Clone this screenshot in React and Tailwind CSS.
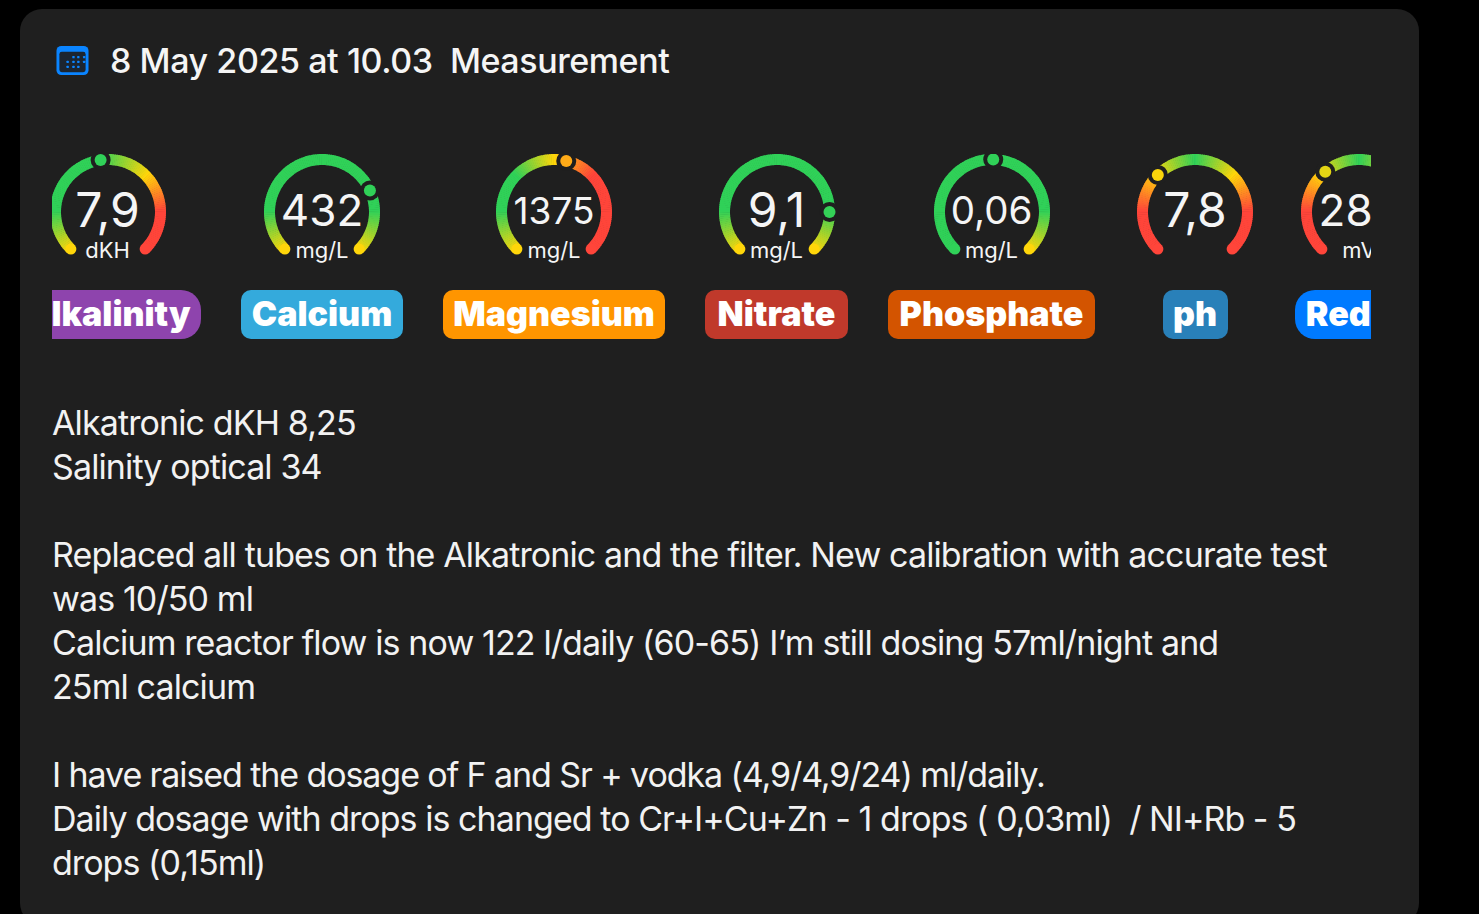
import React from "react";

const GREEN = [48, 209, 88];
const YELLOW = [255, 214, 10];
const RED = [255, 69, 58];

const toHex = (c) => `rgb(${c.map((v) => Math.round(v)).join(",")})`;

const colorAt = (stops, t) => {
  for (let i = 1; i < stops.length; i++) {
    if (t <= stops[i][0]) {
      const [t0, c0] = stops[i - 1];
      const [t1, c1] = stops[i];
      const k = t1 === t0 ? 0 : (t - t0) / (t1 - t0);
      return c0.map((v, j) => v + (c1[j] - v) * k);
    }
  }
  return stops[stops.length - 1][1];
};

// gauge geometry, 270 degree sweep starting bottom left
const R = 52.5;
const CX = 60;
const CY = 58;
const point = (t, r = R) => {
  const a = ((225 + t * 270) * Math.PI) / 180;
  return [CX + r * Math.sin(a), CY - r * Math.cos(a)];
};

const Arc = ({ stops, value }) => {
  const segs = [];
  const n = 135;
  for (let i = 0; i < n; i++) {
    const a = point(i / n);
    const b = point(Math.min(1, (i + 1.3) / n));
    segs.push(
      <path
        key={i}
        d={`M${a[0]} ${a[1]} A${R} ${R} 0 0 1 ${b[0]} ${b[1]}`}
        fill="none"
        stroke={toHex(colorAt(stops, (i + 0.5) / n))}
        strokeWidth="11"
      />
    );
  }
  const start = point(0);
  const end = point(1);
  const dot = point(value);
  return (
    <svg width="120" height="116" viewBox="0 0 120 116" className="block">
      {segs}
      <circle cx={start[0]} cy={start[1]} r="5.5" fill={toHex(colorAt(stops, 0))} />
      <circle cx={end[0]} cy={end[1]} r="5.5" fill={toHex(colorAt(stops, 1))} />
      <circle cx={dot[0]} cy={dot[1]} r="10" fill="#1f1f1f" />
      <circle cx={dot[0]} cy={dot[1]} r="6" fill={toHex(colorAt(stops, value))} />
    </svg>
  );
};

const midGreen = [[0, YELLOW], [0.17, GREEN], [0.83, GREEN], [1, YELLOW]];
const midRed = [[0, RED], [0.17, RED], [0.33, YELLOW], [0.5, GREEN], [0.67, YELLOW], [0.83, RED], [1, RED]];

const gauges = [
  { value: "7,9", unit: "dKH", name: "Alkalinity", t: 0.47, size: "text-[48px]", pill: "w-[187px] bg-[#8e44ad] rounded-[20px]",
    stops: [[0, YELLOW], [0.17, GREEN], [0.47, GREEN], [0.67, YELLOW], [0.83, RED], [1, RED]] },
  { value: "432", unit: "mg/L", name: "Calcium", t: 0.744, size: "text-[44px]", pill: "w-[162px] bg-[#34aadc] rounded-[10px]", stops: midGreen },
  { value: "1375", unit: "mg/L", name: "Magnesium", t: 0.55, size: "text-[37px]", pill: "w-[222px] bg-[#ff9500] rounded-[10px]",
    stops: [[0, YELLOW], [0.17, GREEN], [0.33, GREEN], [0.5, YELLOW], [0.67, RED], [1, RED]] },
  { value: "9,1", unit: "mg/L", name: "Nitrate", t: 0.833, size: "text-[48px]", pill: "w-[143px] bg-[#c0392b] rounded-[10px]", stops: midGreen },
  { value: "0,06", unit: "mg/L", name: "Phosphate", t: 0.505, size: "text-[38.5px]", pill: "w-[207px] bg-[#d35400] rounded-[10px]",
    stops: [[0, GREEN], [0.83, GREEN], [1, YELLOW]] },
  { value: "7,8", unit: "", name: "ph", t: 0.333, size: "text-[48px]", pill: "w-[65px] bg-[#2980b9] rounded-[10px]", stops: midRed },
  { value: "285", unit: "mV", name: "Redox", t: 0.352, size: "text-[44px]", pill: "w-[128px] bg-[#007aff] rounded-[20px]", stops: midRed },
];

const CalendarIcon = () => {
  const dots = [
    [18, 11], [23, 11], [29, 11],
    [12, 16], [18, 16], [23, 16], [29, 16],
    [12, 21], [18, 21], [23, 21],
  ];
  return (
    <svg width="33" height="31" viewBox="0 0 34 31" className="shrink-0">
      <rect x="0.5" y="0.5" width="33" height="30" rx="5" fill="#0a84ff" />
      <rect x="3.5" y="6.5" width="27" height="21" rx="2.5" fill="#1c2530" />
      {dots.map(([x, y]) => (
        <rect key={`${x}-${y}`} x={x - 1.2} y={y - 1.2 + 1} width="2.4" height="2.4" rx="0.6" fill="#0a84ff" />
      ))}
    </svg>
  );
};

const Gauge = ({ g }) => (
  <div className="flex flex-col items-center shrink-0 min-w-[120px]">
    <div className="relative w-[120px] h-[116px] mb-[20px]">
      <Arc stops={g.stops} value={g.t} />
      <div className={`absolute inset-x-0 top-[26px] h-[60px] flex items-center justify-center leading-none text-[#f5f5f5] ${g.size}`}>
        {g.value}
      </div>
      <div className="absolute inset-x-0 top-[83px] text-center text-[22px] leading-[26px] text-[#f5f5f5]">
        {g.unit}
      </div>
    </div>
    <div className={`h-[49px] pb-[2px] flex items-center justify-center text-[34px] leading-none font-black text-white whitespace-nowrap ${g.pill}`}>
      {g.name}
    </div>
  </div>
);

export default function App() {
  return (
    <div className="h-screen overflow-hidden bg-black font-['Inter',sans-serif]">
      <div className="ml-[20px] mt-[9px] w-[1399px] bg-[#1f1f1f] rounded-[22px] pl-[32px] pr-[48px] pt-[29px] pb-[40px] inline-block align-top">
        <div className="flex items-center h-[44px] ml-[4px] gap-[21px] text-[34px] tracking-[-0.42px] font-medium text-[#f5f5f5] whitespace-pre">
          <CalendarIcon />
          <span>8 May 2025 at 10.03  Measurement</span>
        </div>

        <div className="mt-[72px] overflow-hidden">
          <div className="flex gap-[40px] ml-[-38px] w-max">
            {gauges.map((g) => (
              <Gauge key={g.name} g={g} />
            ))}
          </div>
        </div>

        <div className="mt-[62px] text-[34px] leading-[44px] tracking-[-0.88px] text-[#f2f2f2] whitespace-pre-wrap">
          <p>Alkatronic dKH 8,25</p>
          <p>Salinity optical 34</p>
          <p className="mt-[44px]">Replaced all tubes on the Alkatronic and the filter. New calibration with accurate test was 10/50 ml</p>
          <p>Calcium reactor flow is now 122 l/daily (60-65) I’m still dosing 57ml/night and</p>
          <p>25ml calcium</p>
          <p className="mt-[44px] tracking-[-1.09px]">I have raised the dosage of F and Sr + vodka (4,9/4,9/24) ml/daily.</p>
          <p className="tracking-[-0.95px]">Daily dosage with drops is changed to Cr+I+Cu+Zn - 1 drops ( 0,03ml)  / NI+Rb - 5 drops (0,15ml)</p>
        </div>
      </div>
    </div>
  );
}
